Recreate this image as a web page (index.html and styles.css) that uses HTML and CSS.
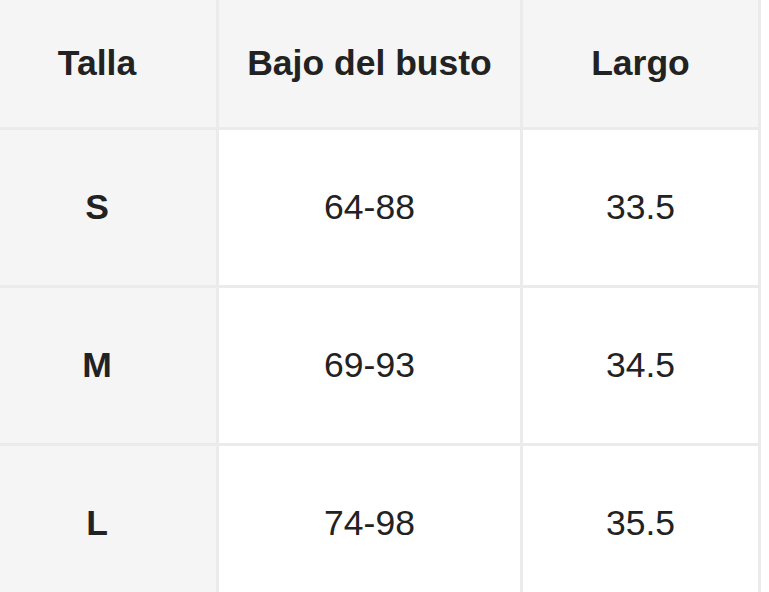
FILE: index.html
```html
<!DOCTYPE html>
<html lang="es">
<head>
<meta charset="utf-8">
<title>Tabla de tallas</title>
<link rel="stylesheet" href="styles.css">
</head>
<body>
<div class="size-table">
  <div class="cell head first">Talla</div>
  <div class="cell head">Bajo del busto</div>
  <div class="cell head">Largo</div>
  <div class="cell label first">S</div>
  <div class="cell">64-88</div>
  <div class="cell">33.5</div>
  <div class="cell label first">M</div>
  <div class="cell">69-93</div>
  <div class="cell">34.5</div>
  <div class="cell label first">L</div>
  <div class="cell">74-98</div>
  <div class="cell">35.5</div>
</div>
</body>
</html>
```
FILE: styles.css
```css
html, body {
  margin: 0;
  padding: 0;
  background: #ffffff;
}
body {
  font-family: "Liberation Sans", Arial, sans-serif;
  color: #222222;
  overflow: hidden;
}
.size-table {
  width: 758px;
  display: grid;
  grid-template-columns: 216px 301px 235px;
  grid-template-rows: 127px 155px 155px 155px;
  gap: 3px;
  padding-right: 3px;
  background: #ebebeb;
}
.cell {
  background: #ffffff;
  display: flex;
  align-items: center;
  justify-content: center;
  font-size: 35.5px;
}
.first {
  padding-right: 22px;
}
.head {
  background: #f5f5f5;
  font-weight: bold;
}
.label {
  background: #f5f5f5;
  font-weight: bold;
}
```
